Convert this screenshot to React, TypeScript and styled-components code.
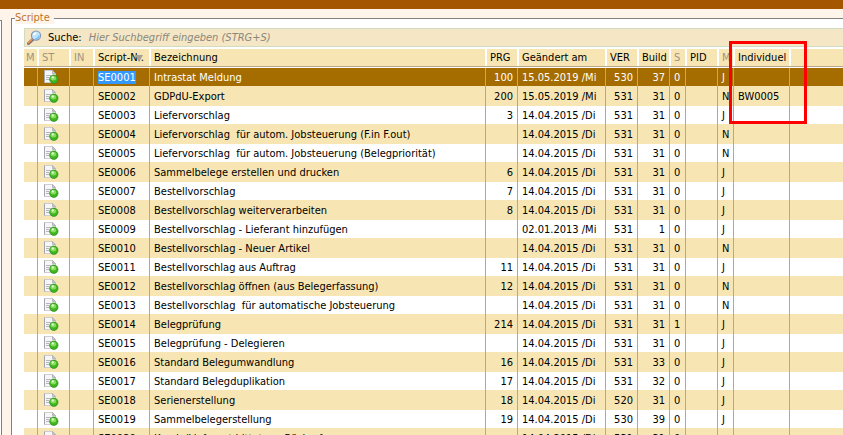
import React from "react";
import styled, { createGlobalStyle, css } from "styled-components";

const colors = {
  frame: "#808080",
  cream: "#fff4e9",
  bar: "#a55600",
  stripe: "#f7e6b3",
  selected: "#a56d00",
  line: "#b9a68c",
  dim: "#9a9484",
  mark: "#ff0000",
};

const GlobalStyle = createGlobalStyle`
  * { box-sizing: border-box; }
  body { margin: 0; background: ${colors.cream}; }
`;

const Page = styled.div`
  height: 100vh;
  overflow: hidden;
  display: flex;
  flex-direction: column;
  background: ${colors.cream};
  color: #000;
  font: 11px/16px "DejaVu Sans Condensed", Tahoma, sans-serif;
`;

const TopBar = styled.header`
  flex: none;
  height: 9px;
  background: ${colors.bar};
`;

const Workspace = styled.main`
  flex: 1;
  min-height: 0;
  display: flex;
  gap: 9px;
`;

const SidePanel = styled.aside`
  flex: none;
  width: 2px;
  margin-top: 11px;
  background: #fff;
  border: solid ${colors.frame};
  border-width: 1px 1px 0 0;
`;

const Group = styled.fieldset`
  flex: 1;
  min-width: 0;
  margin: 3px 0 0;
  padding: 4px 0 0 12px;
  border: solid ${colors.frame};
  border-width: 1px 0 0 1px;
  background: #fff;
`;

const GroupTitle = styled.legend`
  margin-left: -9px;
  padding: 0 4px 0 0;
  line-height: 12px;
  color: #c0752a;
  background: ${colors.cream};
`;

const SearchBar = styled.div`
  display: flex;
  align-items: center;
  height: 19px;
  padding-left: 2px;
  margin-bottom: 2px;
  background: #f5e6c5;
  border: solid #cfdcc0;
  border-width: 1px 0 1px 1px;
`;

const SearchLabel = styled.label`
  margin: 0 7px 0 6px;
`;

const SearchInput = styled.input`
  flex: 1;
  min-width: 0;
  padding: 0;
  border: 0;
  outline: 0;
  background: transparent;
  font: inherit;
  &::placeholder {
    color: #8a867c;
    font-style: italic;
    opacity: 1;
  }
`;

const Grid = styled.table`
  width: 100%;
  table-layout: fixed;
  border-collapse: separate;
  border-spacing: 0;
`;

const Col = styled.col<{ $width?: number }>`
  ${(p) => p.$width && css`width: ${p.$width}px;`}
`;

const HeadRow = styled.tr`
  height: 19px;
`;

const HeadCell = styled.th<{ $dim?: boolean }>`
  position: relative;
  padding: 0;
  text-align: left;
  font-weight: normal;
  color: ${(p) => (p.$dim ? colors.dim : "#000")};
  background: #fff;
`;

const HeadLabel = styled.div`
  height: 18px;
  padding: 1px 0 0 3px;
  overflow: hidden;
  white-space: nowrap;
  background: ${colors.stripe};
  border: solid #fff;
  border-width: 0 1px;
  box-shadow: 0 1px ${colors.line};
  height: 17px;
  margin-bottom: 2px;

  th:first-child > & {
    padding-left: 2px;
    border-left: 0;
  }
  th:last-child > & {
    border-right: 0;
  }
`;

const SortArrow = styled.svg`
  position: absolute;
  left: 41px;
  top: 6px;
`;

const Highlight = styled.div`
  position: absolute;
  z-index: 1;
  left: -5px;
  top: -8px;
  width: calc(100% + 22px);
  height: 83px;
  border: 3px solid ${colors.mark};
  pointer-events: none;
`;

const Row = styled.tr<{ $selected: boolean }>`
  height: 18px;
  background: #fff;
  &:nth-child(even) {
    height: 20px;
    background: ${colors.stripe};
  }
  ${(p) =>
    p.$selected &&
    css`
      background: ${colors.selected};
      color: #fff;
    `}
`;

const Cell = styled.td<{ $align?: "left" | "right" }>`
  padding: 2px 4px 0;
  overflow: hidden;
  white-space: pre;
  text-align: ${(p) => p.$align ?? "left"};
  border-right: 1px solid ${colors.line};
  &:last-child {
    border-right: 0;
  }
`;

const IconCell = styled(Cell)`
  padding: 0 6px;
  line-height: 0;
`;

const Marked = styled.mark`
  color: #fff;
  background: #3399ff;
`;

function SearchIcon() {
  return (
    <svg width="15" height="15" viewBox="0 0 15 15" aria-hidden="true">
      <path d="M1.5 13.5 L5.6 9.6" stroke="#7b6a78" strokeWidth="3" strokeLinecap="round" />
      <path d="M1.4 12.8 L5 9.4" stroke="#e8924a" strokeWidth="1.6" strokeLinecap="round" />
      <circle cx="9" cy="5.6" r="4.6" fill="#bfe3fb" stroke="#8196b8" strokeWidth="1.2" />
      <path d="M6 5.4 A3.1 3.1 0 0 1 10 2.7 Q9 5 6 5.4Z" fill="#fff" />
      <path d="M12 5.6 A3.1 3.1 0 0 1 8.6 8.6" fill="none" stroke="#6fb7ec" strokeWidth="1.2" />
    </svg>
  );
}

function ScriptIcon() {
  return (
    <svg width="15" height="14" viewBox="0 0 15 14" role="img" aria-label="aktiv">
      <path d="M.5 .5 H8.5 L11.5 3.5 V12.5 H.5Z" fill="#f6f6f6" stroke="#cdcdd2" />
      <path d="M.5 .5 V12.5" stroke="#a4a4ac" />
      <path d="M8.5 .5 V3.5 H11.5Z" fill="#cfcfd4" stroke="#a9a9b0" strokeWidth=".8" />
      <path d="M2 5.5 H7 M2 7.5 H5 M2 9.5 H5" stroke="#b4b4bc" />
      <circle cx="9.8" cy="9.2" r="4.2" fill="#3fb51f" stroke="#2b8a18" strokeWidth=".7" />
      <ellipse cx="9.4" cy="8.2" rx="2.8" ry="2.2" fill="#86dc5c" />
      <circle cx="8.8" cy="7.4" r="1.1" fill="#e6ffd8" />
    </svg>
  );
}

type Column = { label: string; width?: number; dim?: boolean };

const columns: Column[] = [
  { label: "M", width: 14, dim: true },
  { label: "ST", width: 32, dim: true },
  { label: "IN", width: 24, dim: true },
  { label: "Script-Nr.", width: 56 },
  { label: "Bezeichnung", width: 336 },
  { label: "PRG", width: 32 },
  { label: "Geändert am", width: 88 },
  { label: "VER", width: 32 },
  { label: "Build", width: 32 },
  { label: "S", width: 16, dim: true },
  { label: "PID", width: 32 },
  { label: "M", width: 16, dim: true },
  { label: "Individuel", width: 56 },
  { label: "" },
];

type Script = {
  name: string;
  prg?: number;
  date?: string;
  ver?: number;
  build?: number;
  s?: number;
  m?: string;
  individual?: string;
};

const scripts: Script[] = [
  { name: "Intrastat Meldung", prg: 100, date: "15.05.2019 /Mi", ver: 530, build: 37 },
  { name: "GDPdU-Export", prg: 200, date: "15.05.2019 /Mi", m: "N", individual: "BW0005" },
  { name: "Liefervorschlag", prg: 3 },
  { name: "Liefervorschlag  für autom. Jobsteuerung (F.in F.out)", m: "N" },
  { name: "Liefervorschlag  für autom. Jobsteuerung (Belegpriorität)", m: "N" },
  { name: "Sammelbelege erstellen und drucken", prg: 6 },
  { name: "Bestellvorschlag", prg: 7 },
  { name: "Bestellvorschlag weiterverarbeiten", prg: 8 },
  { name: "Bestellvorschlag - Lieferant hinzufügen", date: "02.01.2013 /Mi", build: 1 },
  { name: "Bestellvorschlag - Neuer Artikel", m: "N" },
  { name: "Bestellvorschlag aus Auftrag", prg: 11 },
  { name: "Bestellvorschlag öffnen (aus Belegerfassung)", prg: 12, m: "N" },
  { name: "Bestellvorschlag  für automatische Jobsteuerung", m: "N" },
  { name: "Belegprüfung", prg: 214, s: 1 },
  { name: "Belegprüfung - Delegieren" },
  { name: "Standard Belegumwandlung", prg: 16, build: 33 },
  { name: "Standard Belegduplikation", prg: 17, build: 32 },
  { name: "Serienerstellung", prg: 18, ver: 520 },
  { name: "Sammelbelegerstellung", prg: 19, ver: 530, build: 39 },
  { name: "Kunde/Lieferant bittet um Rückruf", m: "" },
];

export default function App() {
  return (
    <Page>
      <GlobalStyle />
      <TopBar />
      <Workspace>
        <SidePanel />
        <Group>
          <GroupTitle>Scripte</GroupTitle>
          <SearchBar>
            <SearchIcon />
            <SearchLabel htmlFor="search">Suche:</SearchLabel>
            <SearchInput id="search" placeholder="Hier Suchbegriff eingeben (STRG+S)" />
          </SearchBar>
          <Grid>
            <colgroup>
              {columns.map((c, i) => (
                <Col key={i} $width={c.width} />
              ))}
            </colgroup>
            <thead>
              <HeadRow>
                {columns.map((c, i) => (
                  <HeadCell key={i} $dim={c.dim}>
                    <HeadLabel>{c.label}</HeadLabel>
                    {c.label === "Script-Nr." && (
                      <SortArrow width="8" height="7" viewBox="0 0 8 7" aria-hidden="true">
                        <path d="M0 0 H8 L4 7Z" fill="#a9a090" />
                      </SortArrow>
                    )}
                    {c.label === "Individuel" && <Highlight />}
                  </HeadCell>
                ))}
              </HeadRow>
            </thead>
            <tbody>
              {scripts.map((s, i) => {
                const id = "SE" + String(i + 1).padStart(4, "0");
                const selected = i === 0;
                return (
                  <Row key={id} $selected={selected}>
                    <Cell />
                    <IconCell>
                      <ScriptIcon />
                    </IconCell>
                    <Cell />
                    <Cell>{selected ? <Marked>{id}</Marked> : id}</Cell>
                    <Cell>{s.name}</Cell>
                    <Cell $align="right">{s.prg}</Cell>
                    <Cell>{s.date ?? "14.04.2015 /Di"}</Cell>
                    <Cell $align="right">{s.ver ?? 531}</Cell>
                    <Cell $align="right">{s.build ?? 31}</Cell>
                    <Cell>{s.s ?? 0}</Cell>
                    <Cell />
                    <Cell>{s.m ?? "J"}</Cell>
                    <Cell>{s.individual}</Cell>
                    <Cell />
                  </Row>
                );
              })}
            </tbody>
          </Grid>
        </Group>
      </Workspace>
    </Page>
  );
}
